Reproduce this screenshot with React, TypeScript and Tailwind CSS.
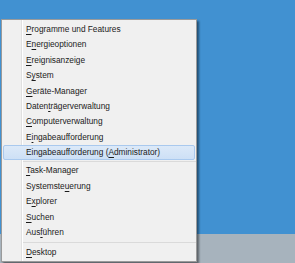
const items: { pre: string; key: string; post: string; hot?: boolean }[] = [
  { pre: '', key: 'P', post: 'rogramme und Features' },
  { pre: 'E', key: 'n', post: 'ergieoptionen' },
  { pre: '', key: 'E', post: 'reignisanzeige' },
  { pre: 'S', key: 'y', post: 'stem' },
  { pre: '', key: 'G', post: 'eräte-Manager' },
  { pre: 'Daten', key: 't', post: 'rägerverwaltung' },
  { pre: '', key: 'C', post: 'omputerverwaltung' },
  { pre: 'E', key: 'i', post: 'ngabeaufforderung' },
  { pre: 'Eingabeaufforderung (', key: 'A', post: 'dministrator)', hot: true },
];

const items2 = [
  { pre: '', key: 'T', post: 'ask-Manager' },
  { pre: 'Systemste', key: 'u', post: 'erung' },
  { pre: 'E', key: 'x', post: 'plorer' },
  { pre: '', key: 'S', post: 'uchen' },
  { pre: 'Aus', key: 'f', post: 'ühren' },
];

function Row({ pre, key2, post, hot }: { pre: string; key2: string; post: string; hot?: boolean }) {
  return (
    <div
      className={
        hot
          ? 'mx-[1px] flex h-[15.4px] items-center rounded-[2px] border border-[#a9c9ee] bg-gradient-to-b from-[#dce9f8] to-[#cde0f6] pl-[22px]'
          : 'mx-[1px] flex h-[15.4px] items-center border border-transparent pl-[22px]'
      }
    >
      <span className="whitespace-nowrap">
        {pre}
        <span className="underline decoration-1 underline-offset-[1.5px]">{key2}</span>
        {post}
      </span>
    </div>
  );
}

function Sep({ h }: { h: string }) {
  return (
    <div className={`flex items-center pl-[21px] ${h}`}>
      <div className="h-px w-full bg-[#dadada]" />
    </div>
  );
}

export default function App() {
  return (
    <div className="relative flex h-[263px] w-[295px] flex-col overflow-hidden bg-[#4191d1]">
      <div className="flex-1" />
      <div className="h-[29px] bg-[#a7b3bd]" />

      <div
        className="absolute left-[1px] top-[19px] w-[196px] border border-[#9a9a9a] bg-[#f0f0f0] bg-[linear-gradient(to_right,#f0f0f0_19px,#e0e0e0_19px,#e0e0e0_20px,#ffffff_20px,#ffffff_21px,#f0f0f0_21px)] pt-[1.5px] pb-[1px] text-[8.3px] text-[#1b1b1b] shadow-[2px_2px_2px_rgba(0,0,0,0.45)]"
        style={{ fontFamily: '"Liberation Sans", Arial, sans-serif' }}
      >
        {items.map((it) => (
          <Row key={it.pre + it.key + it.post} pre={it.pre} key2={it.key} post={it.post} hot={it.hot} />
        ))}
        <Sep h="h-[3px]" />
        {items2.map((it) => (
          <Row key={it.pre + it.key + it.post} pre={it.pre} key2={it.key} post={it.post} />
        ))}
        <Sep h="h-[5px]" />
        <Row pre="" key2="D" post="esktop" />
      </div>
    </div>
  );
}
